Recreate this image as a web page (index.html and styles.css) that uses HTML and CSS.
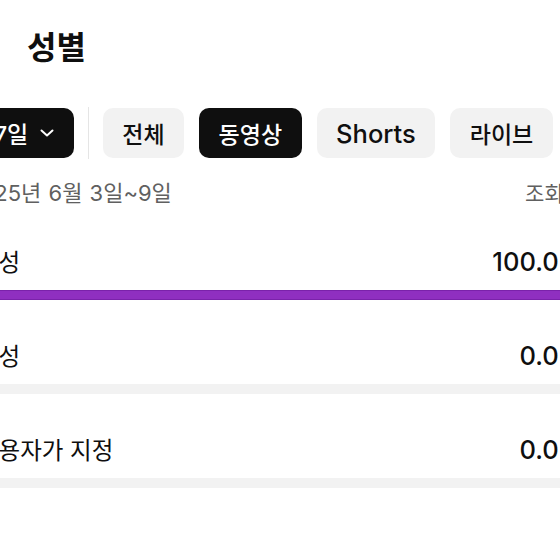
FILE: index.html
```html
<!DOCTYPE html>
<html lang="ko">
<head>
  <meta charset="UTF-8" />
  <meta name="viewport" content="width=device-width, initial-scale=1.0"/>
  <title>성별</title>
  <link rel="stylesheet" href="styles.css">
</head>
<body>
  <div class="page">
    <h1 class="title">성별</h1>
    <div class="chips">
      <button class="chip dark">지난 7일
        <svg width="14" height="8" viewBox="0 0 14 8"><path d="M1.5 1.5l5.5 5 5.5-5" fill="none" stroke="#fff" stroke-width="2" stroke-linecap="round" stroke-linejoin="round"/></svg>
      </button>
      <span class="divider"></span>
      <button class="chip">전체</button>
      <button class="chip dark">동영상</button>
      <button class="chip latin">Shorts</button>
      <button class="chip">라이브</button>
    </div>
    <div class="meta">
      <span class="date">2025년 6월 3일~9일</span>
      <span>조회수</span>
    </div>
    <div class="row">
      <div class="row-head"><span class="label">여성</span><span class="value">100.0%</span></div>
      <div class="bar"><div class="fill" style="width:100%"></div></div>
    </div>
    <div class="row">
      <div class="row-head"><span class="label">남성</span><span class="value">0.0%</span></div>
      <div class="bar"><div class="fill" style="width:0%"></div></div>
    </div>
    <div class="row">
      <div class="row-head"><span class="label">사용자가 지정</span><span class="value">0.0%</span></div>
      <div class="bar"><div class="fill" style="width:0%"></div></div>
    </div>
  </div>
</body>
</html>
```

FILE: styles.css
```css
body { margin: 0; overflow: hidden; background: #fff; color: #0f0f0f; font-family: Inter, "Noto Sans CJK KR", sans-serif; }
.page { margin-left: -23px; width: 606px; }
.title { margin: 0; padding: 26px 0 0 50px; font-size: 32px; line-height: 44px; font-weight: 700; }
.chips { display: flex; align-items: center; gap: 15px; margin: 37px 0 0 -51px; }
.chip { display: flex; align-items: center; gap: 12px; height: 50px; padding: 0 19.5px; border: 0; border-radius: 10px; background: #f2f2f2; color: #0f0f0f; font-family: inherit; font-size: 23px; font-weight: 500; white-space: nowrap; flex-shrink: 0; }
.chip.latin { font-size: 25.5px; }
.chip.dark { background: #0f0f0f; color: #fff; }
.divider { width: 1px; height: 52px; background: #e5e5e5; margin: 0 -1px; flex-shrink: 0; }
.meta { display: flex; justify-content: space-between; margin-top: 22px; font-size: 21px; line-height: 25px; color: #606060; }
.date { margin-left: -10px; font-size: 22px; word-spacing: 1px; }
.row { padding-top: 39px; }
.row-head { display: flex; justify-content: space-between; align-items: center; height: 32px; }
.label { font-size: 23.5px; }
.value { margin-right: -1px; font-size: 25.5px; font-weight: 500; }
.bar { margin-top: 13px; height: 10px; background: #f2f2f2; }
.fill { height: 100%; background: #8f2fc0; box-shadow: inset 0 0 0 1px #7a22aa; }
```
